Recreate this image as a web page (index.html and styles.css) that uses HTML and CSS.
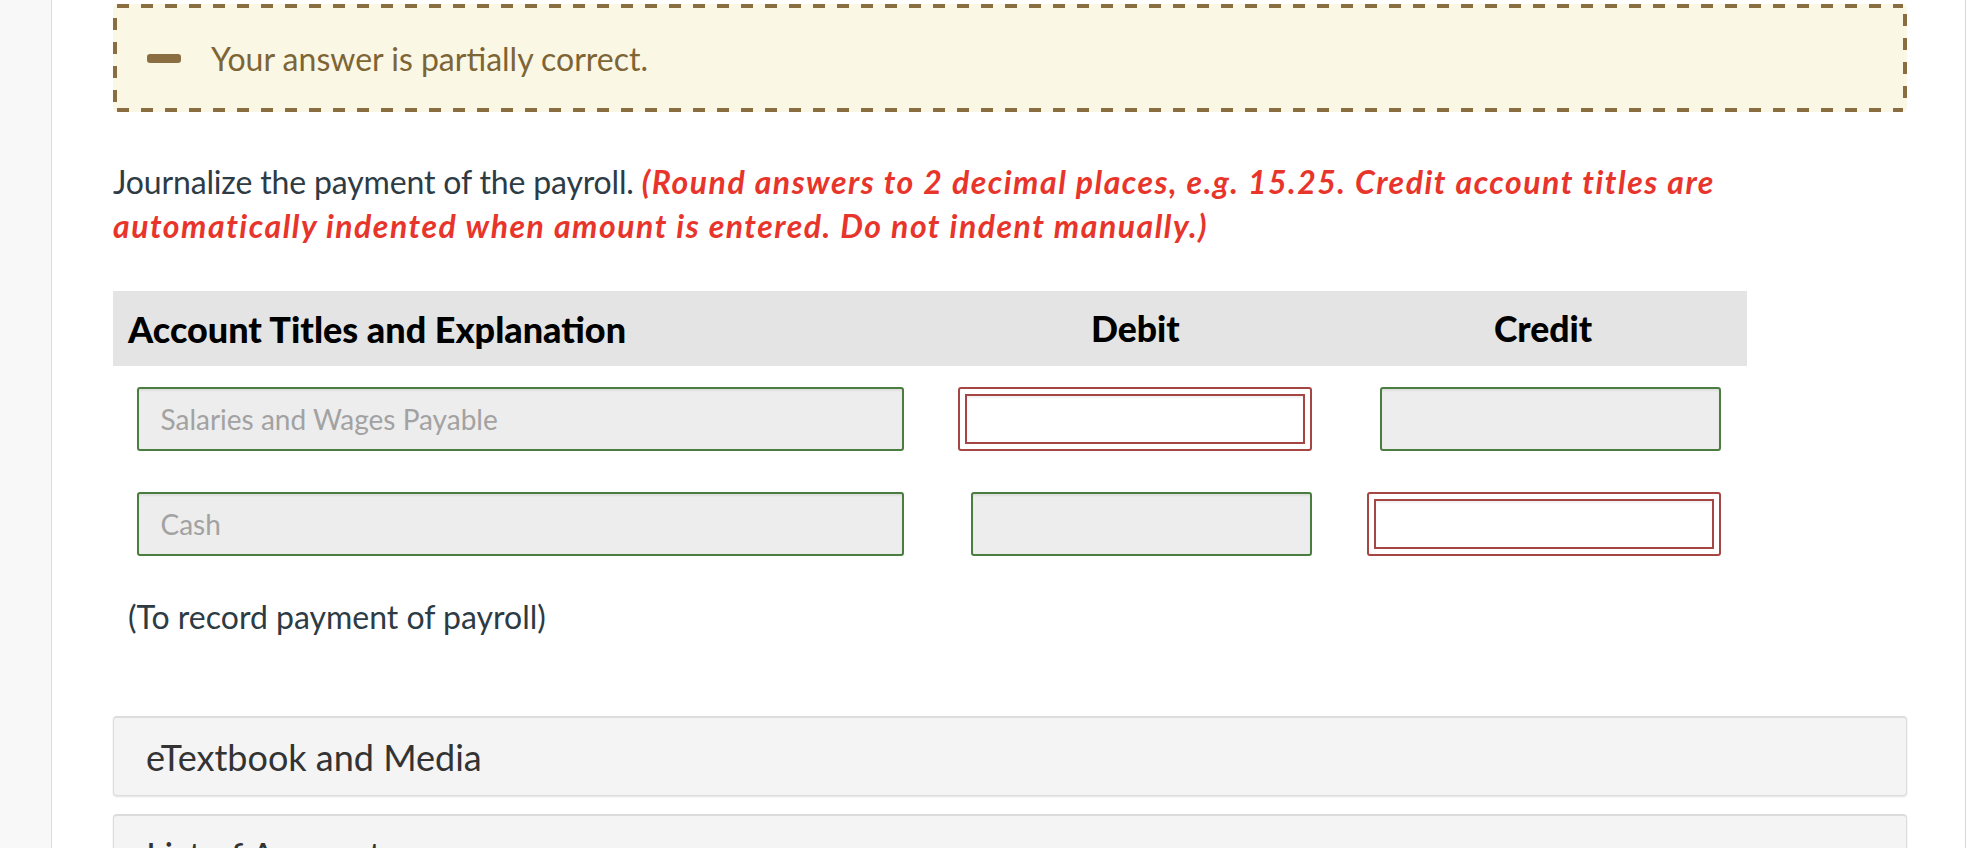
FILE: index.html
```html
<!DOCTYPE html>
<html lang="en">

<head>
    <meta charset="UTF-8">
    <title>Journal entry</title>
    <link rel="stylesheet" href="styles.css">
</head>

<body>
    <div class="page">
        <aside class="sidebar"></aside>

        <main class="main">
            <div class="feedback">
                <span class="feedback-icon"></span>
                <span class="feedback-text">Your answer is partially correct.</span>
            </div>

            <p class="question">Journalize the payment of the payroll. <em class="hint">(Round answers to 2 decimal places, e.g. 15.25. Credit account titles are automatically indented when amount is entered. Do not indent manually.)</em></p>

            <section class="journal">
                <div class="journal-head">
                    <div class="col-title">Account Titles and Explanation</div>
                    <div class="col-amount">Debit</div>
                    <div class="col-amount">Credit</div>
                </div>

                <div class="journal-row">
                    <div class="col-title"><input class="field field-title correct" placeholder="Salaries and Wages Payable" readonly></div>
                    <div class="col-amount"><span class="wrong"><input class="field" readonly></span></div>
                    <div class="col-amount"><input class="field field-amount correct" readonly></div>
                </div>

                <div class="journal-row">
                    <div class="col-title"><input class="field field-title correct" placeholder="Cash" readonly></div>
                    <div class="col-amount"><input class="field field-amount correct" readonly></div>
                    <div class="col-amount"><span class="wrong"><input class="field" readonly></span></div>
                </div>

                <p class="journal-note">(To record payment of payroll)</p>
            </section>

            <div class="panel">eTextbook and Media</div>
            <div class="panel">List of Accounts</div>
        </main>
    </div>
</body>

</html>
```

FILE: styles.css
```css
* {
    box-sizing: border-box;
}

body {
    margin: 0;
    font-family: Lato, "Open Sans", sans-serif;
    color: #2d3b45;
    background-color: white;
    overflow: hidden;
}

.page {
    display: flex;
    height: 848px;
    padding-right: 4px;
}

.sidebar {
    width: 52px;
    background-color: #f8f8f8;
    border-right: 1px solid #dcdcdc;
}

.main {
    flex: 1;
    padding: 4px 58px 0 61px;
    border-right: 1px solid #d6d6d6;
    overflow: hidden;
}

/* feedback banner - long dashes drawn with gradients */
.feedback {
    display: flex;
    align-items: center;
    height: 108px;
    padding-left: 34px;
    border-radius: 5px;
    background:
        repeating-linear-gradient(90deg, #8a6e42 0 12px, transparent 12px 24px) 4px top / calc(100% - 8px) 4px no-repeat,
        repeating-linear-gradient(90deg, #8a6e42 0 12px, transparent 12px 24px) 4px bottom / calc(100% - 8px) 4px no-repeat,
        repeating-linear-gradient(180deg, #8a6e42 0 12px, transparent 12px 24px) left 14px / 4px calc(100% - 20px) no-repeat,
        repeating-linear-gradient(180deg, #8a6e42 0 12px, transparent 12px 24px) right 10px / 4px calc(100% - 20px) no-repeat,
        #fbf7e5;
}

.feedback-icon {
    width: 34px;
    height: 9px;
    border-radius: 3px;
    background-color: #8a6e42;
}

.feedback-text {
    margin-left: 30px;
    font-size: 32px;
    color: #7d6536;
}

/* question */
.question {
    margin: 48px 0 0 0;
    font-size: 32px;
    line-height: 44px;
    letter-spacing: -0.15px;
}

.hint {
    font-weight: bold;
    color: #e8352b;
    letter-spacing: 1.5px;
}

/* journal table */
.journal {
    margin-top: 43px;
    width: 1634px;
}

.journal-head,
.journal-row {
    display: flex;
}

.journal-head {
    height: 75px;
    align-items: center;
    background-color: #e4e4e4;
    font-size: 35.5px;
    font-weight: 900;
    color: black;
}

.journal-head .col-title {
    padding-left: 15px;
    font-size: 36px;
}

.journal-head .col-amount {
    text-align: center;
}

.col-title {
    width: 819px;
}

.col-amount {
    width: 408px;
}

.journal-row {
    margin-top: 21px;
    height: 64px;
}

.journal-row + .journal-row {
    margin-top: 41px;
}

.journal-row .col-title,
.journal-row .col-amount {
    display: flex;
    justify-content: flex-end;
    padding-right: 27px;
}

.journal-row .col-amount:last-child {
    padding-right: 26px;
}

.field {
    height: 64px;
    font-family: Lato, sans-serif;
    font-size: 28px;
    padding: 0 21px;
    border-radius: 3px;
    outline: none;
}

.field::placeholder {
    color: #a2a2a2;
}

.correct {
    border: 2px solid #4b7c40;
    background-color: #ededed;
    box-shadow: inset 0 2px 2px rgba(0, 0, 0, 0.06);
}

.field-title {
    width: 767px;
}

.field-amount {
    width: 341px;
}

.wrong {
    display: block;
    width: 354px;
    height: 64px;
    padding: 5px;
    border: 2px solid #a54642;
    border-radius: 3px;
    background-color: white;
}

.wrong .field {
    display: block;
    width: 100%;
    height: 100%;
    border: 2px solid #a54642;
    border-radius: 0;
    background-color: white;
    box-shadow: inset 0 2px 2px rgba(0, 0, 0, 0.06);
}

.journal-note {
    margin: 39px 0 0 15px;
    font-size: 32px;
    line-height: 44px;
}

/* collapsible panels */
.panel {
    height: 80px;
    margin-top: 77px;
    padding-left: 32px;
    display: flex;
    align-items: center;
    font-size: 36px;
    color: #333;
    background-color: #f4f4f4;
    border: 1px solid #dcdcdc;
    border-top-width: 2px;
    border-radius: 4px;
    box-shadow: 0 1px 2px rgba(0, 0, 0, 0.12);
}

.panel + .panel {
    margin-top: 18px;
}
```
